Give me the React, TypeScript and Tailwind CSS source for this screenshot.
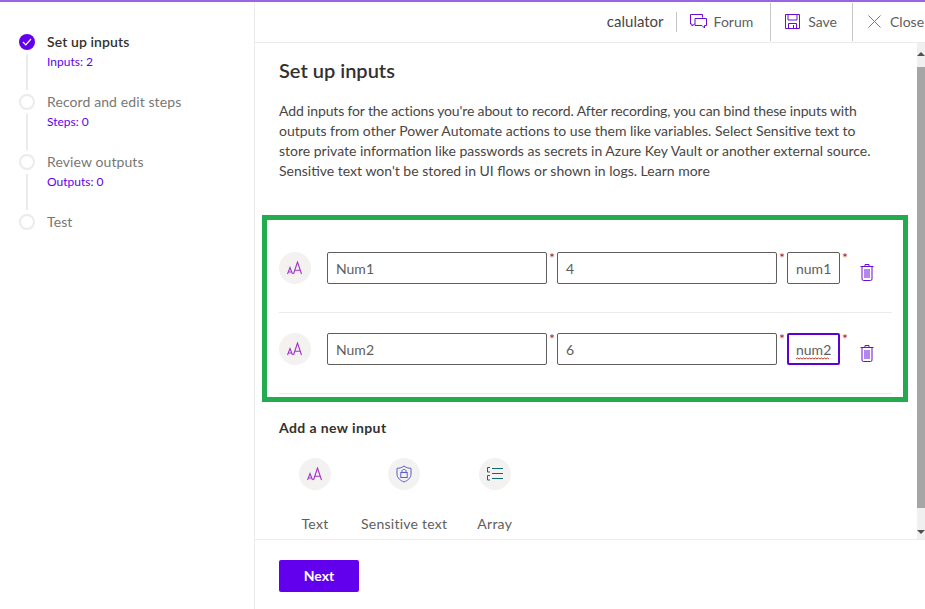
const FONT = "font-['Lato','Noto_Sans',sans-serif]";

// ---- icons ----

function TextIcon() {
  return (
    <svg width="16" height="14" viewBox="0 0 16 14" fill="none" stroke="#a334c8" strokeWidth="1.1">
      <path d="M0.5 13 L3 6.5 L5.5 13 M1.3 11 H4.7" />
      <path d="M6.5 13 L10.5 1 L14.5 13 M8 9.2 H13" />
    </svg>
  );
}

function ShieldIcon() {
  return (
    <svg width="16" height="18" viewBox="0 0 16 18" fill="none" stroke="#5b5fc7" strokeWidth="1">
      <path d="M8 1 C6 2.6 3.5 3.3 1 3.3 V9 C1 13 4.5 15.6 8 17 C11.5 15.6 15 13 15 9 V3.3 C12.5 3.3 10 2.6 8 1 Z" />
      <rect x="4.8" y="7.5" width="6.4" height="5" />
      <path d="M6 7.5 V6 C6 3.9 10 3.9 10 6 V7.5" />
    </svg>
  );
}

function ArrayIcon() {
  return (
    <svg width="16" height="14" viewBox="0 0 16 14" fill="none" stroke="#0f6b73" strokeWidth="1">
      <path d="M3 0.5 H0.5 V5 H3 M3 8.5 H0.5 V13 H3" />
      <path d="M5 1.5 H16 M5 6.5 H16 M5 11.5 H16" />
    </svg>
  );
}

function TrashIcon() {
  return (
    <svg width="14" height="17" viewBox="0 0 14 17" fill="none" stroke="#6a0dd8" strokeWidth="1">
      <path d="M0.5 2.5 H13.5 M5 2.5 V0.5 H9 V2.5" />
      <path d="M2 2.5 V15 Q2 16.5 3.5 16.5 H10.5 Q12 16.5 12 15 V2.5" />
      <path d="M5 5 V14 M7 5 V14 M9 5 V14" />
    </svg>
  );
}

function ForumIcon() {
  return (
    <svg width="17" height="15" viewBox="0 0 17 15" fill="none" stroke="#6a0dd8" strokeWidth="1">
      <path d="M12.5 3.5 V0.5 H0.5 V10 H2 V12 L4.5 10 H5" />
      <path d="M5 4.5 H16.5 V11.5 H14.5 V14 L12 11.5 H5 Z" />
    </svg>
  );
}

function SaveIcon() {
  return (
    <svg width="15" height="15" viewBox="0 0 15 15" fill="none" stroke="#6a0dd8" strokeWidth="1">
      <path d="M0.5 0.5 H14.5 V14.5 H0.5 Z" />
      <path d="M3 0.5 V6 H12 V0.5" />
      <path d="M3.5 14.5 V9.5 H11.5 V14.5 M8.5 11 V14.5" />
    </svg>
  );
}

function CloseIcon() {
  return (
    <svg width="13" height="13" viewBox="0 0 13 13" fill="none" stroke="#8b5cd8" strokeWidth="1">
      <path d="M0.5 0.5 L12.5 12.5 M12.5 0.5 L0.5 12.5" />
    </svg>
  );
}

function CheckIcon() {
  return (
    <svg width="10" height="8" viewBox="0 0 10 8" fill="none" stroke="#ffffff" strokeWidth="1.2">
      <path d="M1 4 L3.8 6.8 L9 1" />
    </svg>
  );
}

function WavyLine() {
  return (
    <svg width="34" height="3" viewBox="0 0 34 3" fill="none" stroke="#c0392b" strokeWidth="1" className="absolute left-[7px] bottom-[3px]">
      <path d="M0 2 L1.5 1 L3 2 L4.5 1 L6 2 L7.5 1 L9 2 L10.5 1 L12 2 L13.5 1 L15 2 L16.5 1 L18 2 L19.5 1 L21 2 L22.5 1 L24 2 L25.5 1 L27 2 L28.5 1 L30 2 L31.5 1 L33 2" />
    </svg>
  );
}

// ---- sidebar ----

const STEPS = [
  { title: 'Set up inputs', sub: 'Inputs: 2', done: true },
  { title: 'Record and edit steps', sub: 'Steps: 0', done: false },
  { title: 'Review outputs', sub: 'Outputs: 0', done: false },
  { title: 'Test', sub: '', done: false },
];

function Sidebar() {
  return (
    <aside className="w-[255px] shrink-0 border-r border-[#edebe9] pl-[19px] pt-[32px]">
      {STEPS.map((step, i) => (
        <div key={step.title} className="flex h-[60px] gap-[12px]">
          <div className="flex w-[16px] flex-col items-center">
            {step.done ? (
              <div className="flex h-[16px] w-[16px] shrink-0 items-center justify-center rounded-full bg-[#6200ee]">
                <CheckIcon />
              </div>
            ) : (
              <div className="h-[16px] w-[16px] shrink-0 rounded-full border-2 border-[#edebe9]" />
            )}
            {i < STEPS.length - 1 && <div className="mt-[4px] h-[36px] w-[2px] bg-[#edebe9]" />}
          </div>
          <div className="-mt-[2px]">
            <div className={`text-[14px] leading-[20px] tracking-[0.1px] ${step.done ? 'font-semibold text-[#323130]' : 'text-[#797775]'}`}>
              {step.title}
            </div>
            {step.sub && <div className="mt-[1px] text-[12px] leading-[18px] text-[#6200ee]">{step.sub}</div>}
          </div>
        </div>
      ))}
    </aside>
  );
}

// ---- header ----

function Header() {
  return (
    <header className="flex h-[41px] shrink-0 items-center justify-end overflow-hidden border-b border-[#edebe9] pb-[1px] text-[14px] text-[#605e5c]">
      <span className="text-[15px] text-[#484644]">calulator</span>
      <div className="ml-[12px] h-[20px] w-px bg-[#c8c6c4]" />
      <div className="flex items-center gap-[7px] pl-[13px] pr-[17px]">
        <ForumIcon />
        <span>Forum</span>
      </div>
      <div className="h-[38px] w-px bg-[#c8c6c4]" />
      <div className="flex items-center gap-[8px] pl-[14px] pr-[15px]">
        <SaveIcon />
        <span>Save</span>
      </div>
      <div className="h-[38px] w-px bg-[#c8c6c4]" />
      <div className="flex w-[72px] shrink-0 items-center gap-[9px] pl-[15px]">
        <CloseIcon />
        <span>Close</span>
      </div>
    </header>
  );
}

// ---- input rows ----

function Star() {
  return <span className="-mt-[1px] w-[10px] shrink-0 self-start pl-[2px] text-[14px] leading-[14px] text-[#a4262c]">*</span>;
}

function InputRow({ label, value, name, focused, first }: { label: string; value: string; name: string; focused?: boolean; first?: boolean }) {
  return (
    <div className={`flex items-start border-b border-[#edebe9] pb-[28px] ${first ? 'pt-[32px]' : 'pt-[20px]'}`}>
      <div className="mr-[16px] flex h-[32px] w-[32px] shrink-0 items-center justify-center rounded-full bg-[#f3f2f1]">
        <TextIcon />
      </div>
      <div className="flex h-[32px] w-[220px] items-center rounded-[2px] border border-[#605e5c] pl-[8px] text-[14px] text-[#605e5c]">{label}</div>
      <Star />
      <div className="flex h-[32px] w-[220px] items-center rounded-[2px] border border-[#605e5c] pl-[8px] text-[14px] text-[#605e5c]">{value}</div>
      <Star />
      <div className={`relative flex h-[32px] w-[53px] items-center rounded-[2px] text-[14px] text-[#605e5c] ${focused ? 'border-2 border-[#5c00d6] pl-[7px]' : 'border border-[#605e5c] pl-[8px]'}`}>
        {name}
        {focused && <WavyLine />}
      </div>
      <Star />
      <div className="ml-[10px] mt-[12px]">
        <TrashIcon />
      </div>
    </div>
  );
}

function AddOption({ icon, label }: { icon: React.ReactNode; label: string }) {
  return (
    <div className="flex flex-col items-center">
      <div className="flex h-[32px] w-[32px] items-center justify-center rounded-full bg-[#f3f2f1]">{icon}</div>
      <span className="mt-[24px] text-[14px] leading-[20px] tracking-[0.25px] text-[#605e5c]">{label}</span>
    </div>
  );
}

// ---- scrollbar ----

function Scrollbar() {
  return (
    <div className="flex w-[8px] shrink-0 flex-col items-center bg-[#f0f0f0]">
      <div className="mt-[9px] h-0 w-0 border-x-[4px] border-b-[4px] border-x-transparent border-b-[#505050]" />
      <div className="mt-[11px] h-[441px] w-full bg-[#a6a6a6]" />
      <div className="mt-[22px] h-0 w-0 border-x-[4px] border-t-[4px] border-x-transparent border-t-[#505050]" />
    </div>
  );
}

export default function App() {
  return (
    <div className={`flex h-[609px] w-[925px] flex-col overflow-hidden bg-white ${FONT}`}>
      <div className="h-[2px] shrink-0 bg-[#9966e0]" />
      <div className="flex min-h-0 flex-1">
        <Sidebar />
        <main className="flex min-w-0 flex-1 flex-col">
          <Header />
          <div className="flex h-[497px] shrink-0 border-b border-[#edebe9]">
            <div className="min-w-0 flex-1 overflow-hidden">
              <div className="pl-[24px] pt-[14px]">
                <h1 className="text-[20px] font-semibold leading-[26px] text-[#323130]">Set up inputs</h1>
                <p className="mt-[18px] text-[14px] leading-[20px] text-[#484644]">
                  <span className="tracking-[-0.14px]">Add inputs for the actions you're about to record. After recording, you can bind these inputs with</span><br />
                  outputs from other Power Automate actions to use them like variables. Select Sensitive text to<br />
                  store private information like passwords as secrets in Azure Key Vault or another external source.<br />
                  Sensitive text won't be stored in UI flows or shown in logs. Learn more
                </p>
              </div>
              <div className="ml-[7px] mt-[34px] h-[187px] w-[646px] border-[5px] border-[#22ac4f] pl-[12px] pr-[11px]">
                <InputRow label="Num1" value="4" name="num1" first />
                <InputRow label="Num2" value="6" name="num2" focused />
              </div>
              <div className="pl-[24px]">
                <h2 className="mt-[16px] text-[14px] font-bold leading-[20px] tracking-[0.4px] text-[#323130]">Add a new input</h2>
                <div className="mt-[20px] flex gap-[30px] pl-[20px]">
                  <AddOption icon={<TextIcon />} label="Text" />
                  <AddOption icon={<ShieldIcon />} label="Sensitive text" />
                  <AddOption icon={<ArrayIcon />} label="Array" />
                </div>
              </div>
            </div>
            <Scrollbar />
          </div>
          <div className="pl-[24px] pt-[20px]">
            <button className="h-[32px] w-[80px] rounded-[2px] bg-[#6200ee] pb-[1px] text-[14px] font-bold text-white">Next</button>
          </div>
        </main>
      </div>
    </div>
  );
}
